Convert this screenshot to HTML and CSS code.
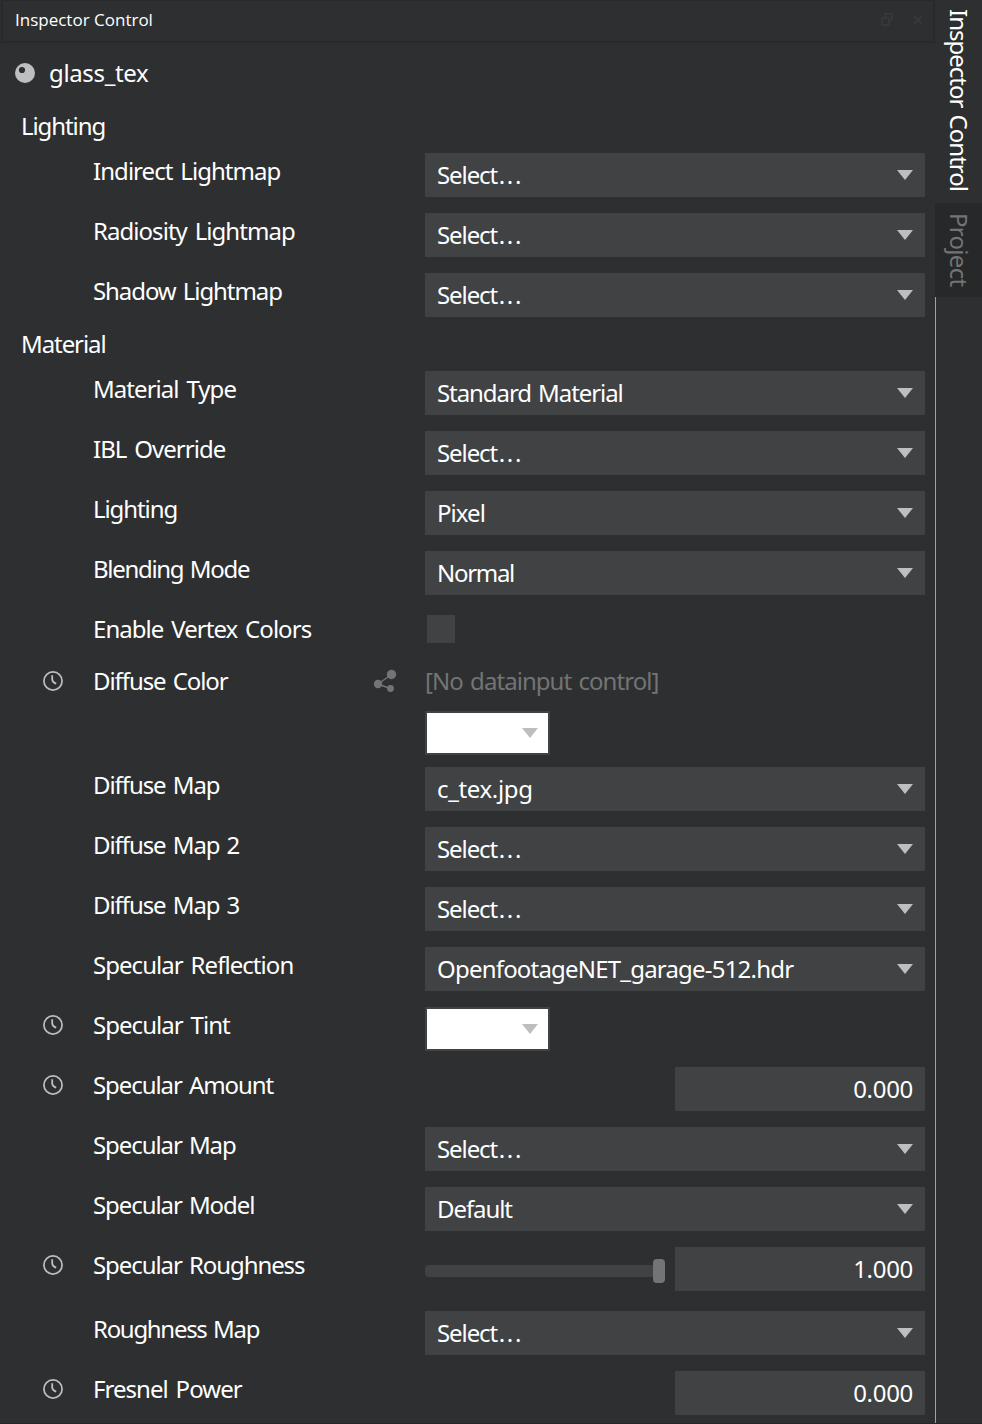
FILE: index.html
```html
<!DOCTYPE html>
<html lang="en">
<head>
<meta charset="utf-8">
<title>Inspector Control</title>
<link rel="stylesheet" href="styles.css">
</head>
<body>
<svg class="defs" width="0" height="0" aria-hidden="true">
  <symbol id="arrow" viewBox="0 0 16 10"><path d="M0 0H16L8 10Z" fill="#bdbebf"/></symbol>
  <symbol id="clock" viewBox="0 0 20 20"><circle cx="10" cy="10" r="9.1" fill="none" stroke="#bdbebf" stroke-width="1.7"/><path d="M9.2 4.2V8.4Q9.4 11.4 13.2 12.6" fill="none" stroke="#bdbebf" stroke-width="1.8"/></symbol>
</svg>
<div class="app">
  <main class="panel">
    <header class="titlebar">
      <span class="title">Inspector Control</span>
      <svg class="winbtn" width="12" height="13" viewBox="0 0 12 13"><path d="M4 4V1H11V7H8M1 5H8V12H1Z" fill="none" stroke="#363738" stroke-width="2"/></svg>
      <svg class="winbtn" width="10" height="10" viewBox="0 0 10 10"><path d="M1 1L9 9M9 1L1 9" stroke="#363738" stroke-width="2.4"/></svg>
    </header>
    <div class="object">
      <svg width="20" height="20" viewBox="0 0 20 20"><circle cx="10" cy="10" r="10" fill="#bdbebf"/><circle cx="7" cy="7" r="3.1" fill="#2e2f30"/></svg>
      <span class="name">glass_tex</span>
    </div>

    <h2 class="section">Lighting</h2>
    <div class="group">
      <div class="row"><i></i><label class="loose">Indirect Lightmap</label><div class="select"><span>Select<span class="dots">...</span></span><svg class="arrow"><use href="#arrow"/></svg></div></div>
      <div class="row"><i></i><label class="loose">Radiosity Lightmap</label><div class="select"><span>Select<span class="dots">...</span></span><svg class="arrow"><use href="#arrow"/></svg></div></div>
      <div class="row"><i></i><label>Shadow Lightmap</label><div class="select"><span>Select<span class="dots">...</span></span><svg class="arrow"><use href="#arrow"/></svg></div></div>
    </div>

    <h2 class="section">Material</h2>
    <div class="group">
      <div class="row"><i></i><label class="loose">Material Type</label><div class="select"><span>Standard Material</span><svg class="arrow"><use href="#arrow"/></svg></div></div>
      <div class="row"><i></i><label class="loose">IBL Override</label><div class="select"><span>Select<span class="dots">...</span></span><svg class="arrow"><use href="#arrow"/></svg></div></div>
      <div class="row"><i></i><label>Lighting</label><div class="select"><span class="loose">Pixel</span><svg class="arrow"><use href="#arrow"/></svg></div></div>
      <div class="row"><i></i><label class="tight">Blending Mode</label><div class="select"><span class="tight">Normal</span><svg class="arrow"><use href="#arrow"/></svg></div></div>
      <div class="row row-check"><i></i><label class="loose">Enable Vertex Colors</label><div class="checkbox"></div></div>
      <div class="row row-color"><svg class="clock"><use href="#clock"/></svg>
        <label>Diffuse Color<svg class="share" width="24" height="24" viewBox="0 0 24 24"><path d="M18.5 5.5L5 15L17 19.5" fill="none" stroke="#737475" stroke-width="1.4"/><circle cx="18.5" cy="5.5" r="4.7" fill="#737475"/><circle cx="5" cy="15" r="4.2" fill="#737475"/><circle cx="17.5" cy="19.5" r="3.4" fill="#737475"/></svg></label>
        <div class="stack"><span class="hint">[No datainput control]</span><div class="swatch"><svg class="arrow"><use href="#arrow"/></svg></div></div></div>
      <div class="row"><i></i><label>Diffuse Map</label><div class="select"><span class="name">c_tex.jpg</span><svg class="arrow"><use href="#arrow"/></svg></div></div>
      <div class="row"><i></i><label>Diffuse Map 2</label><div class="select"><span>Select<span class="dots">...</span></span><svg class="arrow"><use href="#arrow"/></svg></div></div>
      <div class="row"><i></i><label>Diffuse Map 3</label><div class="select"><span>Select<span class="dots">...</span></span><svg class="arrow"><use href="#arrow"/></svg></div></div>
      <div class="row"><i></i><label class="loose">Specular Reflection</label><div class="select"><span class="file">OpenfootageNET_garage-512.hdr</span><svg class="arrow"><use href="#arrow"/></svg></div></div>
      <div class="row"><svg class="clock"><use href="#clock"/></svg><label class="loose">Specular Tint</label><div class="swatch"><svg class="arrow"><use href="#arrow"/></svg></div></div>
      <div class="row"><svg class="clock"><use href="#clock"/></svg><label>Specular Amount</label><div class="number">0.000</div></div>
      <div class="row"><i></i><label>Specular Map</label><div class="select"><span>Select<span class="dots">...</span></span><svg class="arrow"><use href="#arrow"/></svg></div></div>
      <div class="row"><i></i><label>Specular Model</label><div class="select"><span>Default</span><svg class="arrow"><use href="#arrow"/></svg></div></div>
      <div class="row row-slider"><svg class="clock"><use href="#clock"/></svg><label>Specular Roughness</label><div class="ranged"><div class="slider"><div class="handle"></div></div><div class="number">1.000</div></div></div>
      <div class="row"><i></i><label class="tight">Roughness Map</label><div class="select"><span>Select<span class="dots">...</span></span><svg class="arrow"><use href="#arrow"/></svg></div></div>
      <div class="row"><svg class="clock"><use href="#clock"/></svg><label class="loose">Fresnel Power</label><div class="number">0.000</div></div>
    </div>
  </main>
  <nav class="tabs">
    <div class="tab active">Inspector Control</div>
    <div class="tab">Project</div>
    <div class="edge"></div>
  </nav>
</div>
</body>
</html>
```

FILE: styles.css
```css
* { box-sizing: border-box; }
body {
  margin: 0;
  background: #2e2f30;
  color: #fff;
  font: 24px/32px "Noto Sans", sans-serif;
  letter-spacing: -1.08px;
  word-spacing: 2px;
  white-space: nowrap;
}
.tight { letter-spacing: -1.3px; word-spacing: 1.6px; }
.loose { letter-spacing: -0.95px; word-spacing: 2.5px; }
.name { letter-spacing: -0.35px; }
.file { letter-spacing: -0.8px; }
.dots { letter-spacing: 1.7px; margin-left: 1.5px; }
.defs { display: block; }
.app { display: flex; height: 1424px; overflow: hidden; border-bottom: 1px solid #262728; }
.panel { width: 935px; }
.titlebar {
  display: flex;
  align-items: center;
  gap: 20px;
  height: 43px;
  margin-left: 1px;
  padding: 0 10px 3px 12px;
  border: 2px solid #28292a;
  border-top-width: 1px;
}
.title { flex: 1; font: 17px/24px "Open Sans", sans-serif; letter-spacing: 0; word-spacing: 0; }
.object { display: flex; align-items: center; gap: 14px; height: 62px; padding: 0 0 2px 15px; }
.section { height: 48px; margin: 0; padding: 5px 0 0 21px; font-size: 24px; font-weight: 400; line-height: 32px; }
.group { display: flex; flex-direction: column; gap: 16px; margin-bottom: 6px; }
.row {
  display: grid;
  grid-template-columns: 50px 332px 500px;
  align-items: start;
  height: 44px;
  flex: none;
  padding-left: 43px;
}
.row label { display: flex; justify-content: space-between; padding: 2px 28px 0 0; }
.row-check { height: 36px; }
.row-color { height: 88px; }
.row-slider { height: 48px; }
.clock { display: block; width: 20px; height: 20px; margin-top: 8px; }
.share { margin-top: 4px; }
.select {
  display: flex;
  align-items: center;
  justify-content: space-between;
  height: 44px;
  padding: 0 12px;
  background: #404244;
}
.arrow { display: block; width: 16px; height: 10px; }
.checkbox { width: 28px; height: 28px; margin: 4px 0 0 2px; background: #404244; }
.stack { display: flex; flex-direction: column; gap: 14px; padding-top: 2px; }
.hint { color: #737475; letter-spacing: -0.95px; }
.swatch {
  display: flex;
  align-items: center;
  justify-content: flex-end;
  width: 125px;
  height: 44px;
  padding-right: 10px;
  background: #fff;
  border: 2px solid #404244;
}
.number {
  justify-self: end;
  width: 250px;
  height: 44px;
  padding: 6px 12px 0 0;
  background: #404244;
  text-align: right;
  letter-spacing: -0.3px;
}
.ranged { display: flex; gap: 10px; }
.slider {
  display: flex;
  align-items: center;
  justify-content: flex-end;
  width: 240px;
  height: 12px;
  margin-top: 18px;
  background: #404244;
  border-radius: 4px;
}
.handle { width: 12px; height: 24px; background: #737475; border-radius: 4px; }
.tabs { display: flex; flex-direction: column; width: 47px; }
.tab {
  writing-mode: vertical-rl;
  width: 47px;
  height: 94px;
  padding-top: 10px;
  line-height: 44px;
  padding-right: 1px;
  letter-spacing: -0.7px;
  color: #737475;
  background: #262829;
}
.tab.active { height: 203px; padding-top: 9px; letter-spacing: -1px; color: #fff; background: none; }
.edge { flex: 1; border-left: 1px solid #a0a1a2; }
```
